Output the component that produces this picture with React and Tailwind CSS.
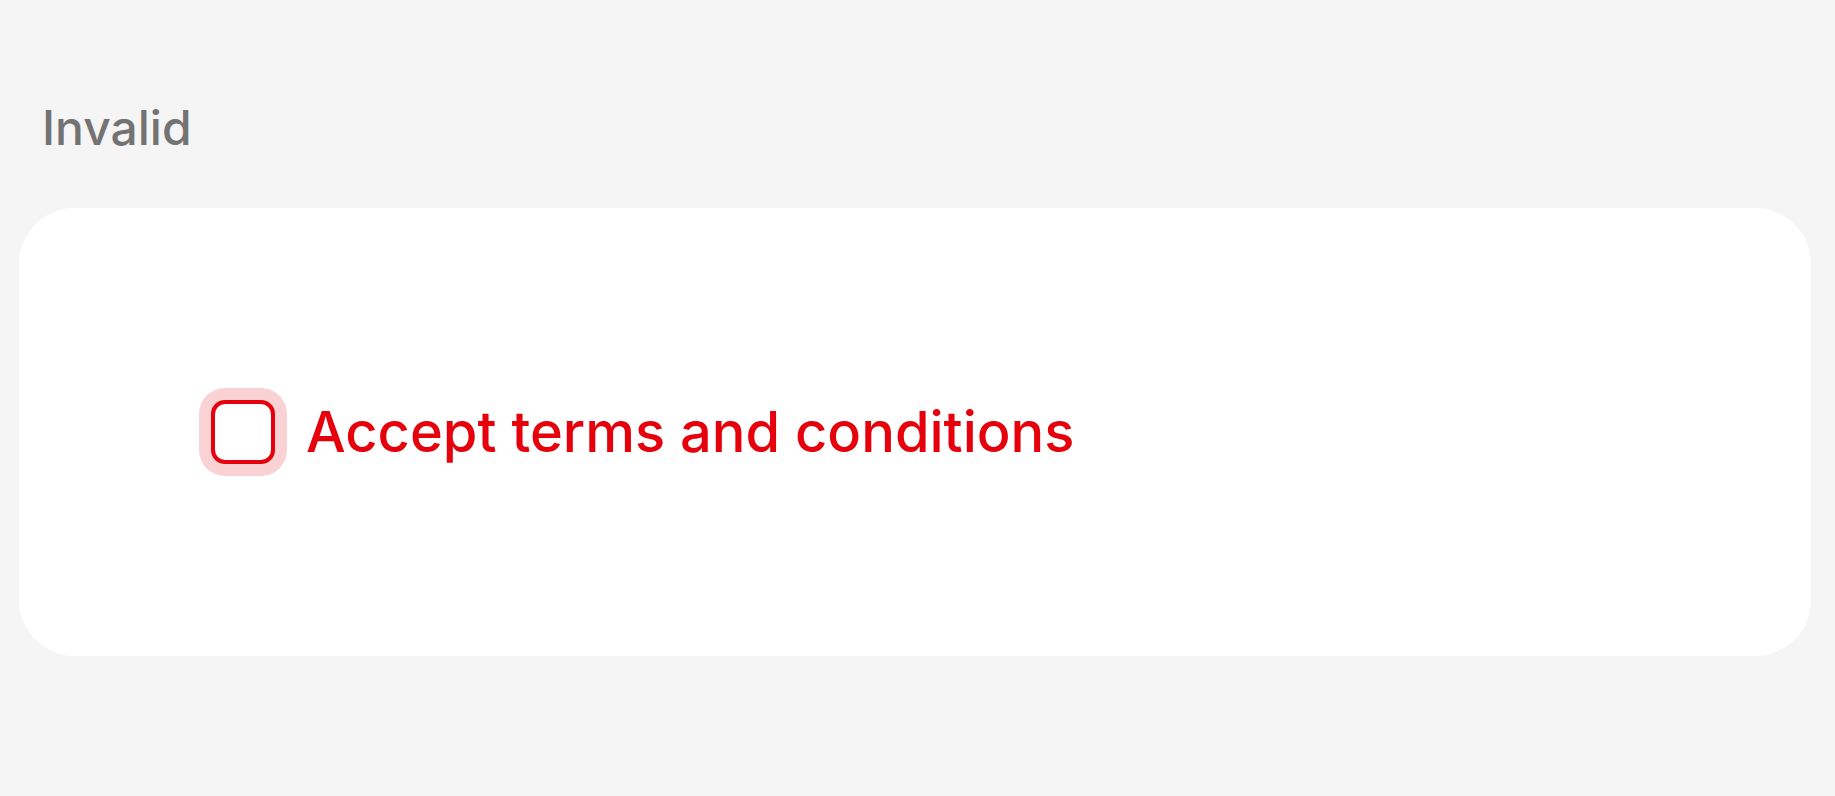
export default function App() {
  return (
    <div className="min-h-screen bg-[#f5f5f5] pl-[19px] pr-[24px] pt-[104px] font-['Inter',sans-serif]">
      <h2 className="pl-[23px] text-[48px] leading-none font-medium text-[#737373]">Invalid</h2>
      <div className="mt-[56px] flex h-[448px] items-center rounded-[56px] bg-white pl-[192px]">
        <label className="flex items-center gap-[31px]">
          <span className="block h-16 w-16 rounded-[14px] border-[4px] border-[#e6000b] bg-white ring-[12px] ring-[#fad2d4]" />
          <span className="text-[56px] leading-none font-medium text-[#e6000b]">Accept terms and conditions</span>
        </label>
      </div>
    </div>
  );
}
